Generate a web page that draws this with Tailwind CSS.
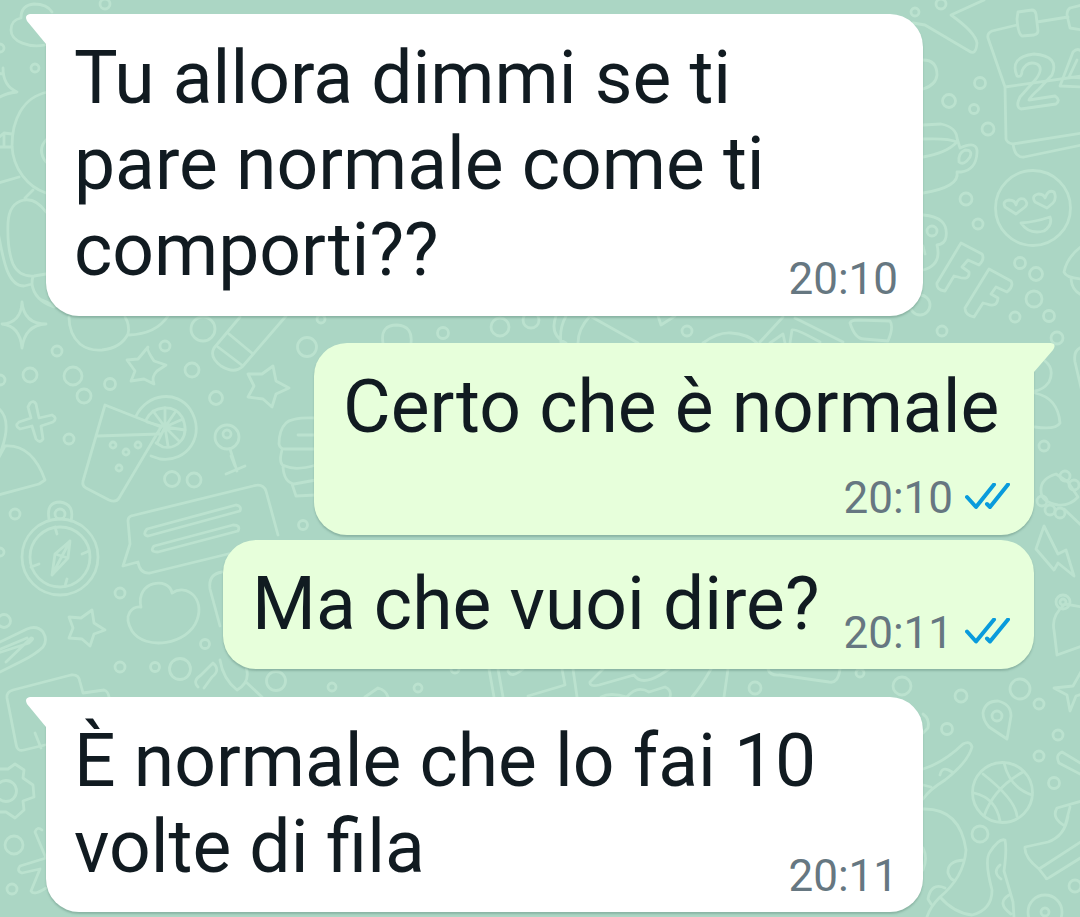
<!DOCTYPE html>
<html lang="it">
  <head>
    <meta charset="UTF-8" />
    <meta name="viewport" content="width=device-width, initial-scale=1.0" />
    <title>Chat</title>
    <script src="https://cdn.jsdelivr.net/npm/@tailwindcss/browser@4"></script>
  </head>
  <body class="relative h-[917px] overflow-hidden bg-[#abd6c4] font-['Roboto',sans-serif] text-[#111b21]">
    <!-- Doodle wallpaper -->
    <svg class="absolute inset-0 h-[917px] w-[1080px] fill-none stroke-[#bbe2cf] stroke-[2.8]" viewBox="0 0 1080 917" stroke-linejoin="round" stroke-linecap="round">
      <!-- left edge, top -->
      <path d="M45 45C30 48 11 42 11 30Q11 20 21 18Q21 5 34 4Q47 4 52 12" />
      <path d="M-2 72Q4 77 3 68Q3 86 17 92Q6 93 -2 98" />
      <path d="M48 92C22 97 12 121 12 146C13 169 28 187 46 193" />
      <path d="M48 138Q36 149 46 162M-2 138L4 133L12 134M-2 147L12 147M4 133L4 147M-2 183L19 177" />
      <path d="M46 212Q36 198 24 200Q9 203 8 223Q7 249 13 264Q19 277 34 276L46 274M25 198L33 190M-2 232C3 258 7 286 24 286L32 284Q32 275 35 276M32 284Q34 300 54 307" />
      <!-- sparkle, blob, crayon -->
      <path d="M22 302Q24 324 46 324Q25 325 22 348Q20 326 2 324Q21 323 22 302Z" />
      <path d="M69 317Q69 334 80 344Q89 351 102 350Q121 348 128 334Q130 325 125 317M129 335Q156 334 168 316M42 300L60 308" />
      <path d="M240 317L214 348Q209 357 221 366Q234 374 242 367L286 316M229 334L253 354M218 347L243 366" />
      <!-- stars -->
      <path d="M148 347Q146 349 154 361L166 365L157 371Q151 377 154 384L144 379L131 381L135 371L127 360L138 359Z" />
      <path d="M273 366L276 381L289 388L276 394L272 407L263 399L248 397L254 386L248 374L262 374Z" />
      <path d="M92 610L94 623L105 630L94 634L90 646L82 639L69 638L73 628L69 617L81 618Z" />
      <!-- plus -->
      <path d="M30 403Q34 400 36 404L39 418L52 415Q58 418 53 422L41 426L43 439Q40 444 36 439L32 426L20 429Q14 426 19 422L31 418L28 407Z" />
      <path d="M-2 408Q12 419 2 448L-2 460M-2 459L5 446Q32 444 45 480L39 484L-2 495" />
      <!-- drink -->
      <path d="M105 405L161 427L119 498Q116 503 109 500L86 488Q82 486 83 481ZM97 436L160 434" />
      <path d="M136 416C147 393 177 390 190 409C207 435 187 463 160 459L151 456M146 420C153 405 174 404 182 417C191 436 178 450 163 447L156 443" />
      <path d="M165 427L165 408M165 427L176 411M165 427L183 419M165 427L185 430M165 427L179 441M165 427L168 446M165 427L157 443M165 427L153 411M165 427L147 422" />
      <!-- lollipop pin, fist -->
      <path d="M230 449L237 471M226 474L245 466M231 456L235 466" />
      <path d="M316 418Q292 417 286 423Q279 430 279 444Q280 449 285 449L316 449M282 450Q278 465 285 466Q296 471 316 465M283 467Q284 482 294 484L316 480M292 484L296 496L316 495M298 435L316 435" />
      <!-- speech bubble with lines -->
      <path d="M131 516L253 486Q263 483 266 491L278 535M128 521L130 544L123 566L138 562Q140 574 150 573L232 553M128 521Q128 517 131 516M147 529L236 505Q242 506 240 511L148 536Q142 535 147 529ZM154 546L233 525Q241 525 238 531L158 552Q149 552 154 546Z" />
      <!-- compass -->
      <circle cx="60" cy="557" r="38" />
      <circle cx="60" cy="557" r="30" />
      <path d="M49 519Q46 502 60 502Q75 504 71 521" />
      <path d="M70 541L52 575L55 554ZM70 541L68 558L52 575M55 554L68 558M55 527L57 534M82 554L89 551M31 567L39 564M65 586L67 579" />
      <!-- cloud -->
      <path d="M141 607C135 581 169 576 172 593C187 583 205 599 197 620C188 645 145 651 132 631C122 614 133 606 141 607Z" />
      <path d="M222 572Q208 574 210 589L220 626" />
      <!-- paperclip, papers -->
      <path d="M-2 653L29 643Q35 638 31 638L6 662M-2 643L27 629Q37 625 43 632Q48 640 43 647Q36 654 22 661L-2 673M-2 650L27 638" />
      <path d="M45 745L24 750Q17 752 16 744L7 698Q6 692 13 690L71 675Q79 674 80 682L83 693L104 690Q108 691 109 697M35 733L41 748" />
      <!-- gear, star bits -->
      <circle cx="6" cy="791" r="10.500" />
      <path d="M-2 769L8 769L15 764L24 770L23 778L33 785L34 797L23 801L24 810L15 818L6 812L-2 812" />
      <path d="M46 858L35 832Q37 826 42 830M46 858L20 866Q16 871 22 873L40 869L31 891Q34 896 46 888" />
      <!-- between the first two bubbles -->
      <path d="M383 343Q380 325 397 325Q413 326 411 343M556 316Q549 335 566 343M566 316Q559 329 561 343M590 316Q578 329 578 343M590 316L638 343M658 316L661 325L675 316" />
      <path d="M703 343Q718 332 731 333Q748 334 757 343M760 342L783 317M770 343L783 334L785 343M795 318L843 342M790 343L792 330Q795 328 820 342M850 323Q855 339 864 339L888 341Q894 327 890 321L858 320Q851 320 850 323" />
      <!-- between the third and fourth bubbles -->
      <path d="M198 687Q192 681 201 675L213 663Q221 670 212 677L204 688M220 660Q223 679 237 690Q251 682 246 667M246 682L262 697M365 697L378 688Q386 690 388 697M489 669L494 697M498 669L503 697M508 671Q511 679 523 669M562 669L565 685L528 696M573 669L577 697M603 669L590 682Q589 687 599 685L634 675Q641 686 660 675L669 669M601 697Q610 692 627 697Q637 685 649 692L665 687Q672 690 670 697M711 669Q702 685 692 697M728 669L724 697M768 669Q770 676 780 675L829 682Q838 684 840 669" />
      <!-- top right: boomerang, calendar -->
      <path d="M913 23L925 25L969 51Q976 56 977 43Q975 32 951 15L984 0" />
      <path d="M1017 25L992 31Q987 33 988 38L1005 87L1006 139Q1007 143 1013 144L1082 133M1037 22L1068 17M1005 87L1082 76M1013 144Q1015 158 1024 157L1082 145M1018 12L1032 10Q1035 10 1036 14L1038 31Q1038 34 1034 35L1022 36Q1018 34 1017 19ZM1082 5L1070 8Q1067 10 1067 15L1070 28L1082 30" />
      <path d="M1017 76Q1009 57 1034 54Q1060 56 1052 75L1039 89Q1030 97 1029 100L1055 96Q1061 100 1056 104L1021 109Q1015 107 1020 97L1036 79Q1044 68 1037 64Q1027 60 1022 71Q1022 78 1017 76ZM1082 87L1060 86L1073 52Q1078 47 1082 52M1082 78L1069 77L1077 60" />
      <!-- cup -->
      <path d="M923 60Q937 60 937 75Q936 85 923 89M923 125L941 124Q956 127 957 138L960 148Q978 140 977 153Q976 170 961 172L957 172Q960 187 923 193M923 139Q949 138 957 142M923 157Q946 153 956 143M965 150Q973 150 970 157Q964 166 959 162Q958 153 965 150Z" />
      <!-- heart-eyes face -->
      <circle cx="1033" cy="208" r="37.500" />
      <path d="M1016 214L1005 207Q1002 201 1009 200Q1015 200 1016 205Q1018 197 1024 199Q1029 203 1025 207ZM1047 208L1035 202Q1031 196 1038 194Q1044 194 1045 198Q1048 189 1054 192Q1057 198 1053 203ZM1021 223Q1035 222 1050 217Q1053 225 1044 231Q1029 235 1021 223Z" />
      <!-- BFF -->
      <path d="M923 215Q949 217 946 237Q945 244 937 245Q942 265 923 270M923 246L925 254" />
      <path d="M961 243L982 254Q985 259 979 265L968 260L962 267L969 272Q970 281 958 277L954 276L945 291Q936 290 937 283ZM989 269L1011 281Q1014 286 1007 292L996 287L991 294L998 298Q997 308 987 304L983 303L974 317Q965 315 965 308Z" />
      <path d="M1082 246Q1067 257 1064 272Q1066 278 1082 279M1071 279Q1072 291 1082 295" />
      <!-- right edge: knob, gamepad, bolt, bell -->
      <path d="M1045 361Q1055 369 1049 382Q1043 390 1035 391M1035 393Q1058 398 1060 423Q1056 430 1035 427M1082 347Q1073 350 1075 362L1082 392" />
      <path d="M1068 482L1056 474Q1040 479 1041 491Q1041 502 1058 505Q1070 506 1078 497ZM1064 509L1082 526M1044 526L1036 549L1054 570L1058 563L1074 576L1066 550L1058 554ZM1082 607L1065 604Q1051 616 1054 630L1057 655L1082 646" />
      <circle cx="1065" cy="476" r="5" /><circle cx="1074" cy="485" r="5" /><circle cx="1042" cy="501" r="5" /><circle cx="1050" cy="510" r="5" /><circle cx="1060" cy="513" r="5" />
      <circle cx="1063" cy="602" r="7" /><circle cx="1063" cy="602" r="3" />
      <!-- bottom right: pin, ball, banana shapes -->
      <path d="M1007 739L989 727Q983 720 983 713Q985 701 998 701Q1011 704 1011 716Z" />
      <circle cx="997" cy="716" r="5" />
      <path d="M1082 670L1073 686L1054 688L1067 695L1070 711L1076 696L1082 694" />
      <circle cx="1002.500" cy="792.500" r="30" />
      <path d="M983 774Q1015 799 1017 816M1004 763Q1010 788 1032 795M974 793Q996 798 1000 821M1023 772Q994 788 984 816" />
      <path d="M923 769Q943 763 963 744Q970 740 972 747Q968 762 945 780Q929 790 923 799M940 775Q942 765 952 772M923 785L931 787" />
      <path d="M923 809Q960 808 966 850Q964 877 940 897Q930 907 927 917M940 897Q954 913 972 915Q992 910 992 890Q984 860 990 852Q999 838 1005 840Q1007 850 1004 871L1013 902L1014 917M964 860Q947 861 948 873Q951 881 955 880M945 888Q931 882 928 899L931 904M1000 865Q992 872 1001 879M1009 895Q996 903 1011 914M923 848Q928 858 923 870" />
      <path d="M1082 764L1062 752Q1055 755 1059 763L1082 775M1082 801L1057 808Q1051 818 1065 826L1070 807M1068 816Q1065 836 1048 842L1025 847Q1024 857 1039 869L1046 878Q1046 880 1050 877L1082 857M1039 869L1082 841" />
      <!-- two-ring shapes -->
      <circle cx="1045" cy="912" r="17" /><circle cx="1045" cy="912" r="4" />
      <circle cx="227" cy="437" r="12" /><circle cx="227" cy="434" r="4" /><circle cx="60" cy="514" r="5" />
      <!-- loose dots -->
      <circle cx="105" cy="4" r="5" /><circle cx="0" cy="48" r="4" /><circle cx="35" cy="68" r="4" />
      <circle cx="57" cy="351" r="5" /><circle cx="165" cy="346" r="5" /><circle cx="203" cy="329" r="12" />
      <circle cx="0" cy="380" r="5" /><circle cx="30" cy="375" r="7" /><circle cx="73" cy="376" r="9" />
      <circle cx="84" cy="396" r="7" /><circle cx="110" cy="384" r="5.500" /><circle cx="192" cy="370" r="7" />
      <circle cx="307" cy="347" r="9.500" /><circle cx="216" cy="398" r="6.500" /><circle cx="69" cy="439" r="5" />
      <circle cx="113" cy="445" r="3" /><circle cx="138" cy="445" r="3" /><circle cx="126" cy="452" r="3" /><circle cx="119" cy="468" r="3" />
      <circle cx="172" cy="479" r="7.500" /><circle cx="194" cy="480" r="7" /><circle cx="15" cy="514" r="5" />
      <circle cx="303" cy="525" r="4.500" /><circle cx="120" cy="593" r="5" /><circle cx="0" cy="552" r="4" />
      <circle cx="4" cy="621" r="6.500" /><circle cx="120" cy="667" r="5" /><circle cx="155" cy="667" r="4.500" />
      <circle cx="180" cy="669" r="10.500" /><circle cx="205" cy="644" r="4.500" /><circle cx="276" cy="681" r="9.500" />
      <circle cx="332" cy="687" r="4" /><circle cx="418" cy="688" r="4" /><circle cx="455" cy="669" r="4" />
      <circle cx="755" cy="688" r="6" /><circle cx="860" cy="673" r="4" /><circle cx="902" cy="686" r="9" />
      <circle cx="321" cy="319" r="4" /><circle cx="443" cy="333" r="5.500" />
      <circle cx="500" cy="327" r="9" /><circle cx="531" cy="320" r="8" /><circle cx="687" cy="331" r="5" />
      <circle cx="14" cy="845" r="9" /><circle cx="12" cy="889" r="5" />
      <circle cx="915" cy="12" r="4" /><circle cx="941" cy="4" r="5" /><circle cx="980" cy="83" r="5.500" />
      <circle cx="949" cy="101" r="6.500" /><circle cx="974" cy="109" r="4.500" /><circle cx="988" cy="129" r="6" />
      <circle cx="966" cy="199" r="6" /><circle cx="978" cy="224" r="5" /><circle cx="932" cy="231" r="5" />
      <circle cx="1020" cy="263" r="5.500" /><circle cx="1036" cy="274" r="6.500" /><circle cx="1034" cy="299" r="8" />
      <circle cx="1049" cy="316" r="5.500" /><circle cx="1015" cy="317" r="5" /><circle cx="942" cy="331" r="5" />
      <circle cx="1057" cy="338" r="6" /><circle cx="920" cy="305" r="10" /><circle cx="1044" cy="446" r="5" />
      <circle cx="961" cy="696" r="6" /><circle cx="1020" cy="689" r="10" /><circle cx="1039" cy="704" r="5" />
      <circle cx="947" cy="729" r="5.500" /><circle cx="1058" cy="735" r="5" /><circle cx="1039" cy="756" r="5" />
      <circle cx="1054" cy="783" r="5.500" /><circle cx="980" cy="834" r="8" /><circle cx="1075" cy="886" r="6" />
      <path d="M923 714Q930 719 928 728L923 733" />
    </svg>

    <!-- Messages -->
    <main class="relative flex flex-col px-[46px] pt-[14px] text-[73.2px] leading-[86px]">
      <article class="relative h-[302px] w-[877px] rounded-[33px] rounded-tl-none bg-white pt-[21px] pl-[28px] shadow-[0_2px_2px_rgba(80,120,105,0.35)]">
        <svg class="absolute top-0 -left-[20px] h-[31px] w-[21px] fill-white" viewBox="0 0 21 31"><path d="M21 0H4Q-2 1 1 7L20 30L21 31Z" /></svg>
        <p class="whitespace-nowrap">Tu allora dimmi se ti<br />pare normale come ti<br />comporti??</p>
        <time class="absolute right-[25px] bottom-[12px] text-[44px] leading-[50px] text-[#667781]">20:10</time>
      </article>

      <article class="relative mt-[27px] h-[192px] w-[720px] self-end rounded-[33px] rounded-tr-none bg-[#e7ffdb] pt-[21px] pl-[29px] shadow-[0_2px_2px_rgba(80,120,105,0.35)]">
        <svg class="absolute top-0 -right-[21px] h-[31px] w-[22px] fill-[#e7ffdb]" viewBox="0 0 22 31"><path d="M0 0H18Q24 1 20 7L1 29L0 31Z" /></svg>
        <p class="whitespace-nowrap">Certo che è normale</p>
        <div class="absolute right-[24px] bottom-[12px] flex items-center gap-[12px]">
          <time class="text-[44px] leading-[50px] text-[#667781]">20:10</time>
          <svg class="h-[30px] w-[45px] fill-none stroke-[#099bdc] stroke-[4]" viewBox="0 0 45 30" stroke-linecap="round" stroke-linejoin="round"><path d="M2 14L11 24L29 1.500M22 21L25 24L43 1.500" /></svg>
        </div>
      </article>

      <article class="relative mt-[5px] h-[129px] w-[811px] self-end rounded-[33px] bg-[#e7ffdb] pt-[21px] pl-[29px] shadow-[0_2px_2px_rgba(80,120,105,0.35)]">
        <p class="whitespace-nowrap">Ma che vuoi dire?</p>
        <div class="absolute right-[24px] bottom-[11px] flex items-center gap-[12px]">
          <time class="text-[44px] leading-[50px] text-[#667781]">20:11</time>
          <svg class="h-[30px] w-[45px] fill-none stroke-[#099bdc] stroke-[4]" viewBox="0 0 45 30" stroke-linecap="round" stroke-linejoin="round"><path d="M2 13.500L11 23.500L29 1.500M22 20.500L25 23.500L43 1.500" /></svg>
        </div>
      </article>

      <article class="relative mt-[28px] h-[215px] w-[877px] rounded-[33px] rounded-tl-none bg-white pt-[21px] pl-[28px] shadow-[0_2px_2px_rgba(80,120,105,0.35)]">
        <svg class="absolute top-0 -left-[20px] h-[31px] w-[21px] fill-white" viewBox="0 0 21 31"><path d="M21 0H4Q-2 1 1 7L20 30L21 31Z" /></svg>
        <p class="whitespace-nowrap">È normale che lo fai 10<br />volte di fila</p>
        <time class="absolute right-[25px] bottom-[11px] text-[44px] leading-[50px] text-[#667781]">20:11</time>
      </article>
    </main>
  </body>
</html>
